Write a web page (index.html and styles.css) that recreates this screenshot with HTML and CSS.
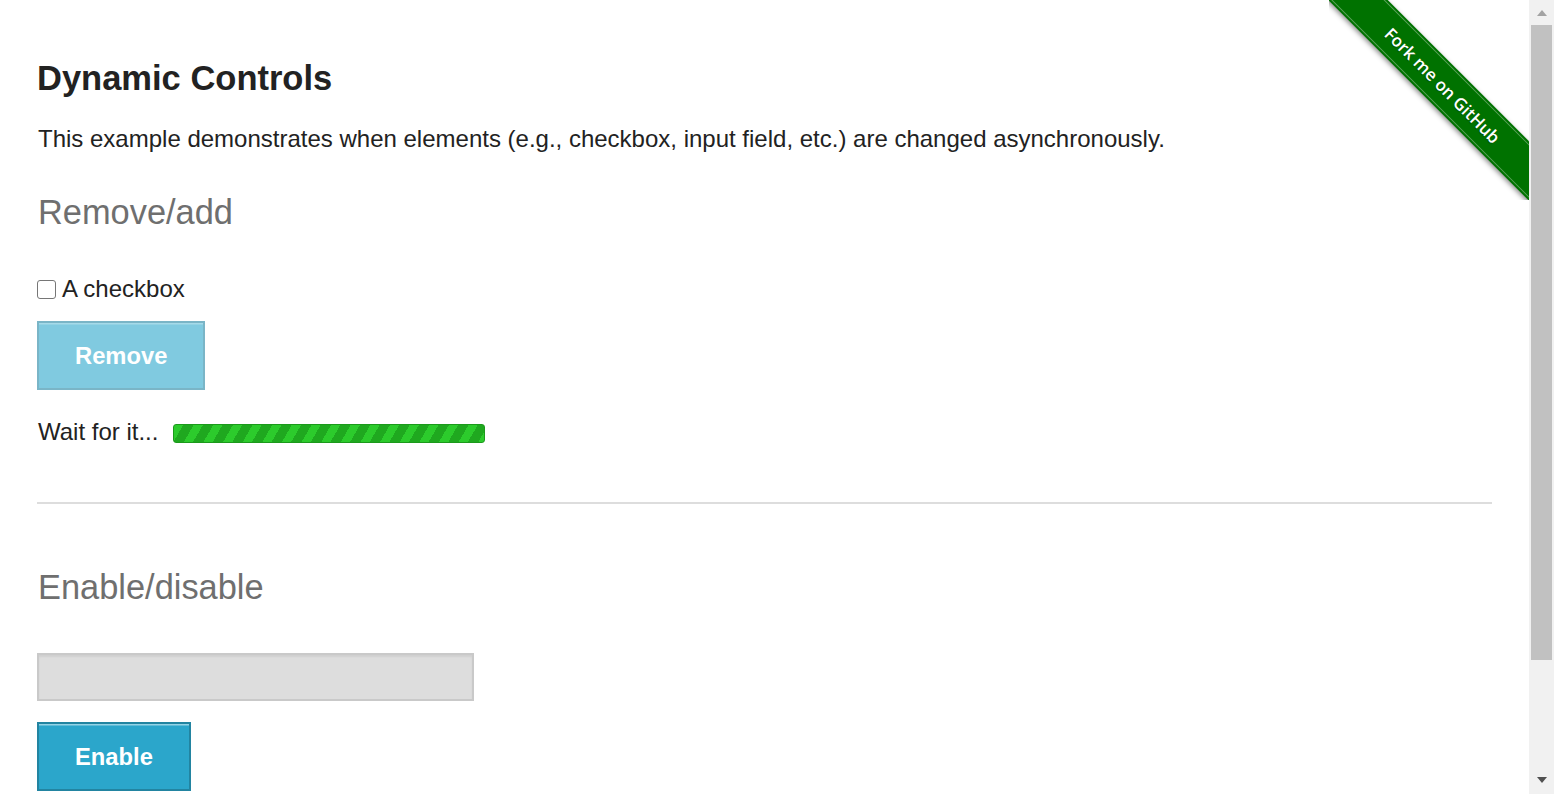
FILE: index.html
```html
<!DOCTYPE html>
<html lang="en">
<head>
<meta charset="utf-8">
<title>The Internet</title>
<link rel="stylesheet" href="styles.css">
</head>
<body>
<div class="viewport">
  <a class="ribbon" href="#"><span class="ribbon-band"><span class="ribbon-text">Fork me on GitHub</span></span></a>
  <div class="page">
    <div class="example">
      <h3 class="title">Dynamic Controls</h3>
      <p class="intro">This example demonstrates when elements (e.g., checkbox, input field, etc.) are changed asynchronously.</p>
      <h4 class="subheader">Remove/add</h4>
      <form class="checkbox-example">
        <label class="check-row"><input type="checkbox" class="check"><span>A checkbox</span></label>
        <button type="button" class="btn btn-remove" disabled>Remove</button>
        <div class="loading"><span>Wait for it...</span><span class="bar"></span></div>
      </form>
      <hr class="divider">
      <h4 class="subheader subheader-second">Enable/disable</h4>
      <form class="input-example">
        <input type="text" class="field" disabled>
        <button type="button" class="btn btn-enable">Enable</button>
      </form>
    </div>
  </div>
</div>
<div class="scrollbar" aria-hidden="true">
  <div class="sb-btn"><span class="sb-arrow sb-up"></span></div>
  <div class="sb-track"><div class="sb-thumb"></div></div>
  <div class="sb-btn sb-btn-down"><span class="sb-arrow sb-down"></span></div>
</div>
</body>
</html>
```
FILE: styles.css
```css
html, body {
  margin: 0;
  padding: 0;
  height: 100%;
  overflow: hidden;
}
body {
  display: flex;
  font-family: "Liberation Sans", Arial, sans-serif;
  font-size: 24px;
  color: #222222;
  background: #ffffff;
}

.viewport {
  position: relative;
  flex: 1;
  min-width: 0;
  height: 100%;
  overflow: hidden;
}

/* scrollbar */
.scrollbar {
  width: 25px;
  flex: none;
  height: 100%;
  display: flex;
  flex-direction: column;
  background: #f1f1f1;
}
.sb-btn {
  height: 25px;
  flex: none;
  display: flex;
  justify-content: center;
}
.sb-arrow {
  display: block;
  width: 0;
  height: 0;
  border-left: 5.5px solid transparent;
  border-right: 5.5px solid transparent;
}
.sb-up {
  margin-top: 10px;
  border-bottom: 6px solid #a3a3a3;
}
.sb-down {
  margin-top: 8px;
  border-top: 6px solid #505050;
}
.sb-track {
  flex: 1;
  padding: 0 2px;
}
.sb-thumb {
  height: 635px;
  background: #c1c1c1;
}

.page {
  padding: 0 37px;
}

.title {
  margin: 58px 0 0;
  font-size: 34.5px;
  line-height: 41px;
  font-weight: 700;
  color: #222222;
}

.intro {
  margin: 21px 0 0;
  padding-left: 1px;
  line-height: 38px;
}

.subheader {
  margin: 34px 0 0;
  padding-left: 1px;
  font-size: 34.4px;
  line-height: 41px;
  font-weight: 400;
  color: #6f6f6f;
}
.subheader-second {
  margin-top: 63px;
}

.checkbox-example,
.input-example {
  margin: 0;
  display: flex;
  flex-direction: column;
  align-items: flex-start;
}

.check-row {
  margin-top: 37px;
  display: flex;
  align-items: center;
  height: 38px;
  gap: 6px;
}
.check {
  appearance: none;
  -webkit-appearance: none;
  margin: 0;
  width: 19px;
  height: 19px;
  border: 1.5px solid #767676;
  border-radius: 3px;
  background: #ffffff;
}

.btn {
  display: block;
  height: 69px;
  padding: 0 36px;
  border: 2px solid #2284a1;
  background: #2ba6cb;
  box-shadow: inset 0 1.5px 0 rgba(255, 255, 255, 0.5);
  color: #ffffff;
  font-family: "Liberation Sans", Arial, sans-serif;
  font-size: 23.75px;
  font-weight: 700;
  line-height: 1;
  cursor: pointer;
}
.btn-remove {
  margin-top: 13px;
  background: #80cae0;
  border-color: #7ab5c7;
  box-shadow: inset 0 1.5px 0 rgba(255, 255, 255, 0.3);
  cursor: default;
}
.btn-enable {
  margin-top: 21px;
}

.loading {
  margin: 23px 0 0;
  padding-left: 1px;
  height: 38px;
  display: flex;
  align-items: center;
  gap: 15px;
}
.bar {
  display: block;
  width: 310px;
  height: 17px;
  margin-top: 3px;
  border: 1px solid #1b9a1b;
  border-radius: 3px;
  background: repeating-linear-gradient(120deg, #2ccb2c 0 8px, #1fa81f 8px 17px);
}

.divider {
  margin: 51px 0 0;
  border: 0;
  border-top: 2px solid #dddddd;
  height: 0;
}

.field {
  display: block;
  margin: 45px 0 0;
  width: 437px;
  height: 48px;
  box-sizing: border-box;
  border: 2px solid #c9c9c9;
  background: #dddddd;
  box-shadow: inset 0 2px 2px rgba(0, 0, 0, 0.06);
  padding: 0 10px;
  font-family: "Liberation Sans", Arial, sans-serif;
  font-size: 20px;
}

/* GitHub ribbon */
.ribbon {
  position: absolute;
  top: 0;
  right: 0;
  width: 200px;
  height: 200px;
  overflow: hidden;
  text-decoration: none;
  z-index: 5;
}
.ribbon-band {
  position: absolute;
  left: -56px;
  top: 64px;
  width: 340px;
  height: 42px;
  box-sizing: border-box;
  transform: rotate(45deg);
  background: #007200;
  box-shadow: 0 2px 5px rgba(0, 0, 0, 0.45);
  display: flex;
  align-items: center;
  justify-content: center;
}
.ribbon-band::before {
  content: "";
  position: absolute;
  left: 0;
  right: 0;
  top: 2px;
  bottom: 2px;
  border-top: 1px solid rgba(255, 255, 255, 0.35);
  border-bottom: 1px solid rgba(255, 255, 255, 0.35);
}
.ribbon-text {
  font-family: "Open Sans", "DejaVu Sans", sans-serif;
  font-weight: 600;
  font-size: 17px;
  color: #ffffff;
  text-shadow: 0 1px 1px rgba(0, 0, 0, 0.3);
}
```
